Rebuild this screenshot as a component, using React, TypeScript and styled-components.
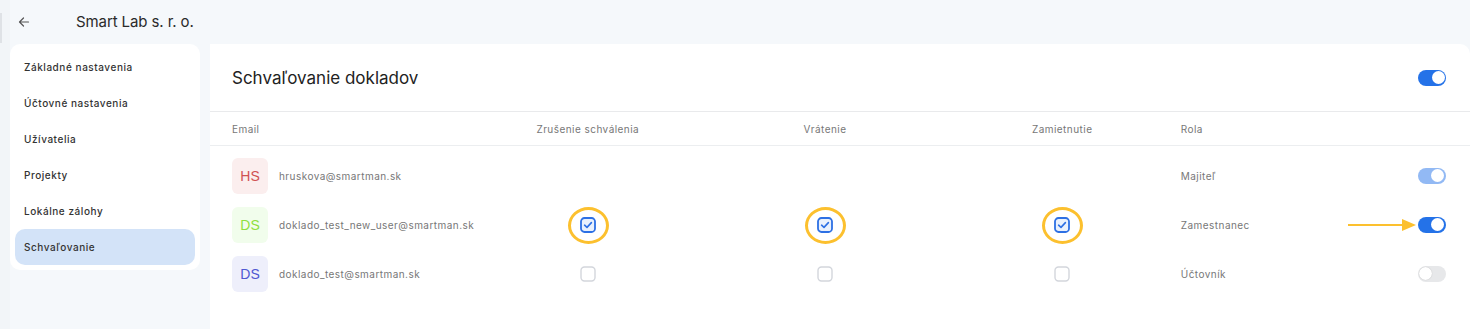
import { FC } from "react";
import styled, { createGlobalStyle } from "styled-components";

const Global = createGlobalStyle`
    body {
        margin: 0;
        background: #f5f8fb;
        font-family: "Inter", "Liberation Sans", sans-serif;
        color: #2b2b2b;
    }
`;

const Page = styled.div`
    display: flex;
    height: 329px;
    overflow: hidden;
`;

const Rail = styled.div`
    width: 10px;
    flex-shrink: 0;
    background: #f2f5f8;
    &::before {
        content: "";
        display: block;
        margin-top: 13px;
        width: 2px;
        height: 30px;
        background: #dfe2e6;
    }
`;

const Body = styled.div`
    flex: 1;
    display: flex;
    flex-direction: column;
`;

const TopBar = styled.div`
    height: 44px;
    display: flex;
    align-items: center;
    padding-left: 8px;
`;

const BackButton = styled.button`
    all: unset;
    width: 12px;
    display: flex;
    margin-right: 46px;
`;

const Company = styled.div`
    font-size: 15px;
    font-weight: 400;
    letter-spacing: -0.1px;
    color: #2a2a2a;
    padding-bottom: 2px;
`;

const Columns = styled.div`
    flex: 1;
    display: flex;
`;

const Side = styled.div`
    width: 200px;
    flex-shrink: 0;
`;

const Menu = styled.nav`
    width: 190px;
    box-sizing: border-box;
    background: #fff;
    border-radius: 10px;
    padding: 5px;
`;

const MenuItem = styled.div<{ $active?: boolean }>`
    height: 36px;
    display: flex;
    align-items: center;
    padding-left: 9px;
    border-radius: 10px;
    font-size: 10px;
    font-weight: 500;
    letter-spacing: 0.55px;
    color: #333;
    background: ${(p) => (p.$active ? "#d3e3f8" : "transparent")};
`;

const Card = styled.section`
    flex: 1;
    background: #fff;
    border-top-right-radius: 10px;
`;

const CardHead = styled.div`
    height: 67px;
    display: flex;
    align-items: center;
    justify-content: space-between;
    padding: 0 24px 0 22px;
    border-bottom: 1.5px solid #e9eaec;
`;

const Title = styled.h2`
    margin: 0;
    font-size: 17px;
    font-weight: 400;
    letter-spacing: 0;
    color: #222;
`;

const Grid = styled.div`
    display: grid;
    grid-template-columns: repeat(5, minmax(0, 1fr)) 28px;
    align-items: center;
    padding: 0 24px 0 22px;
`;

const HeadRow = styled(Grid)`
    height: 33px;
    border-bottom: 1px solid #eceef0;
`;

const HeadCell = styled.div<{ $center?: boolean }>`
    font-size: 10px;
    letter-spacing: 0.45px;
    color: #777;
    white-space: nowrap;
    text-align: ${(p) => (p.$center ? "center" : "left")};
`;

const Rows = styled.div`
    padding-top: 5px;
`;

const Row = styled(Grid)`
    height: 49px;
`;

const UserCell = styled.div`
    display: flex;
    align-items: center;
    gap: 11px;
    white-space: nowrap;
`;

const Avatar = styled.div<{ $bg: string; $fg: string }>`
    width: 36px;
    height: 36px;
    flex-shrink: 0;
    border-radius: 6px;
    display: flex;
    align-items: center;
    justify-content: center;
    background: ${(p) => p.$bg};
    color: ${(p) => p.$fg};
    font-family: "Liberation Sans", Arial, sans-serif;
    font-size: 14px;
`;

const Email = styled.span`
    font-size: 10px;
    letter-spacing: 0.45px;
    color: #777;
`;

const Role = styled.span`
    font-size: 10px;
    letter-spacing: 0.45px;
    color: #777;
`;

const CheckCell = styled.div`
    display: flex;
    justify-content: center;
`;

const CheckWrap = styled.span`
    position: relative;
    display: flex;
`;

const Ring = styled.span`
    position: absolute;
    inset: -10px -13px -11px -12px;
    border: 3px solid #fcc02e;
    border-radius: 50%;
`;

const ToggleCell = styled.div`
    position: relative;
    display: flex;
    justify-content: flex-end;
`;

const Switch = styled.span<{ $state: "on" | "dim" | "off" }>`
    width: 28px;
    height: 16px;
    border-radius: 8px;
    box-sizing: border-box;
    padding: 1.5px;
    display: flex;
    justify-content: ${(p) => (p.$state === "off" ? "flex-start" : "flex-end")};
    background: ${(p) =>
        p.$state === "on" ? "#2472e8" : p.$state === "dim" ? "#92b9f4" : "#e7e8ea"};
    &::after {
        content: "";
        width: 13px;
        height: 13px;
        border-radius: 50%;
        background: #fff;
        box-shadow: ${(p) =>
            p.$state === "off" ? "0 0 1px rgba(0,0,0,0.25)" : "none"};
    }
`;

const Pointer = styled.svg`
    position: absolute;
    right: calc(100% + 2px);
    top: 50%;
    margin-top: -7px;
`;

const Checkbox: FC<{ checked?: boolean; ring?: boolean }> = ({ checked, ring }) => (
    <CheckWrap>
        {ring && <Ring />}
        {checked ? (
            <svg width="16" height="16" viewBox="0 0 16 16">
                <rect x="1" y="1" width="14" height="14" rx="3.5" fill="#e9f1fd" stroke="#2d70e4" strokeWidth="1.8" />
                <path d="M4.6 8.2 L7 10.4 L11.4 5.6" fill="none" stroke="#2d70e4" strokeWidth="1.6" strokeLinecap="round" strokeLinejoin="round" />
            </svg>
        ) : (
            <svg width="16" height="16" viewBox="0 0 16 16">
                <rect x="1" y="1" width="14" height="14" rx="3.5" fill="#fff" stroke="#d3d6dc" strokeWidth="1.4" />
            </svg>
        )}
    </CheckWrap>
);

type User = {
    initials: string;
    bg: string;
    fg: string;
    email: string;
    perms: boolean[] | null;
    role: string;
    toggle: "on" | "dim" | "off";
    marked?: boolean;
};

const users: User[] = [
    { initials: "HS", bg: "#fbeeee", fg: "#d05252", email: "hruskova@smartman.sk", perms: null, role: "Majiteľ", toggle: "dim" },
    { initials: "DS", bg: "#f1fdec", fg: "#8fe03e", email: "doklado_test_new_user@smartman.sk", perms: [true, true, true], role: "Zamestnanec", toggle: "on", marked: true },
    { initials: "DS", bg: "#eeeffb", fg: "#5058d2", email: "doklado_test@smartman.sk", perms: [false, false, false], role: "Účtovník", toggle: "off" },
];

const menu = ["Základné nastavenia", "Účtovné nastavenia", "Užívatelia", "Projekty", "Lokálne zálohy", "Schvaľovanie"];

export default function App() {
    return (
        <Page>
            <Global />
            <Rail />
            <Body>
                <TopBar>
                    <BackButton>
                        <svg width="12" height="12" viewBox="0 0 12 12" fill="none" stroke="#555" strokeWidth="1.2" strokeLinecap="round" strokeLinejoin="round">
                            <path d="M10.5 6 H1.5 M5.5 2 L1.5 6 L5.5 10" />
                        </svg>
                    </BackButton>
                    <Company>Smart Lab s. r. o.</Company>
                </TopBar>
                <Columns>
                    <Side>
                        <Menu>
                            {menu.map((m) => (
                                <MenuItem key={m} $active={m === "Schvaľovanie"}>
                                    {m}
                                </MenuItem>
                            ))}
                        </Menu>
                    </Side>
                    <Card>
                        <CardHead>
                            <Title>Schvaľovanie dokladov</Title>
                            <Switch $state="on" />
                        </CardHead>
                        <HeadRow>
                            <HeadCell>Email</HeadCell>
                            <HeadCell $center>Zrušenie schválenia</HeadCell>
                            <HeadCell $center>Vrátenie</HeadCell>
                            <HeadCell $center>Zamietnutie</HeadCell>
                            <HeadCell>Rola</HeadCell>
                            <span />
                        </HeadRow>
                        <Rows>
                            {users.map((u) => (
                                <Row key={u.email}>
                                    <UserCell>
                                        <Avatar $bg={u.bg} $fg={u.fg}>{u.initials}</Avatar>
                                        <Email>{u.email}</Email>
                                    </UserCell>
                                    {[0, 1, 2].map((i) => (
                                        <CheckCell key={i}>
                                            {u.perms && <Checkbox checked={u.perms[i]} ring={u.marked} />}
                                        </CheckCell>
                                    ))}
                                    <Role>{u.role}</Role>
                                    <ToggleCell>
                                        {u.marked && (
                                            <Pointer width="68" height="14" viewBox="0 0 68 14">
                                                <path d="M0 7 H56" stroke="#fcc02e" strokeWidth="2.2" />
                                                <path d="M54 1 L68 7 L54 13 Z" fill="#fcc02e" />
                                            </Pointer>
                                        )}
                                        <Switch $state={u.toggle} />
                                    </ToggleCell>
                                </Row>
                            ))}
                        </Rows>
                    </Card>
                </Columns>
            </Body>
        </Page>
    );
}
